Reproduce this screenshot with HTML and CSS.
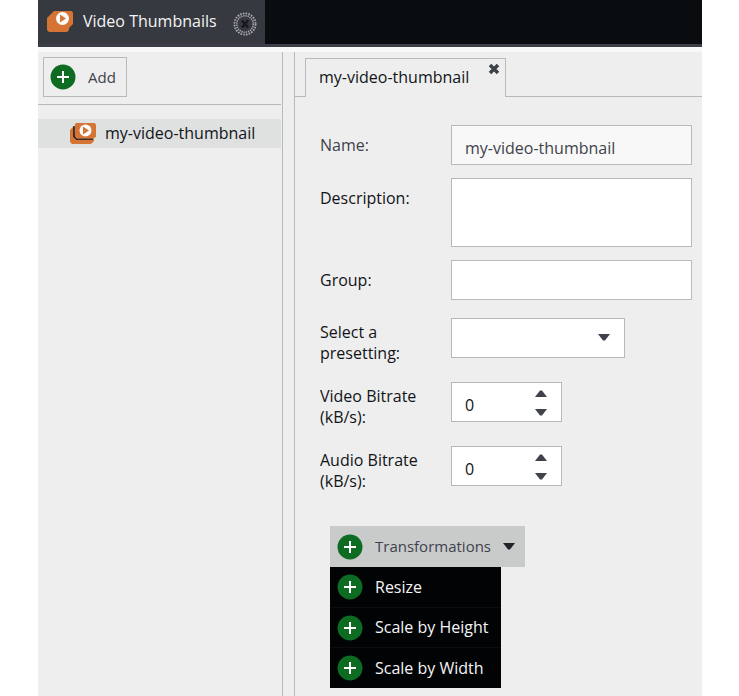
FILE: index.html
```html
<!DOCTYPE html>
<html lang="en">
<head>
<meta charset="utf-8">
<title>Video Thumbnails</title>
<link rel="stylesheet" href="styles.css">
</head>
<body>
<svg class="defs" aria-hidden="true">
  <symbol id="plus" viewBox="0 0 26 26">
    <circle cx="13" cy="13" r="12.5" fill="#0d6b22"/>
    <path d="M7 13h12M13 7v12" stroke="#fff" stroke-width="2"/>
  </symbol>
  <symbol id="down" viewBox="0 0 12 7"><path d="M0 0h12L7 6.500H5z" fill="currentColor"/></symbol>
  <symbol id="up" viewBox="0 0 12 7"><path d="M0 7h12L7 .5H5z" fill="currentColor"/></symbol>
</svg>
<div class="app">
  <header class="topbar">
    <div class="app-tab">
      <svg class="film" viewBox="0 0 26 21" aria-hidden="true">
        <path d="M6 1l1-1h17.500L26 1.500V13l-4 4v2l-2 2H2l-2-2V7z" fill="#d67436"/>
        <circle cx="15.500" cy="7.500" r="6.500" fill="#fff"/>
        <path d="M13 3.500v8l6-4z" fill="#d67436"/>
      </svg>
      <span>Video Thumbnails</span>
      <button class="app-close" aria-label="Close panel">
        <svg viewBox="0 0 24 24">
          <circle cx="12" cy="12" r="9.500" fill="none" stroke="#a9abad" stroke-width="4" stroke-dasharray="1.500 1"/>
          <circle cx="12" cy="12" r="9.500" fill="none" stroke="#363940" stroke-width=".8"/>
          <path d="M9 8.500l6 7M15 8.500l-6 7" stroke="#15181c" stroke-width="2.500"/>
        </svg>
      </button>
    </div>
  </header>
  <div class="workspace">
    <aside class="sidebar">
      <div class="toolbar">
        <button class="add"><svg class="plus"><use href="#plus"/></svg><span>Add</span></button>
      </div>
      <a class="tree-item" href="#form">
        <svg class="film" viewBox="0 0 26 21" aria-hidden="true">
          <path d="M4 3L0 7v12l2 2h19l3-3v-2H5z" fill="#d67436"/>
          <path d="M4 3v10.500L6.500 16H23" fill="none" stroke="#111418" stroke-width="1.500"/>
          <path d="M6 0h18.500L26 1.500v12L24 15.500H7L5 13.500V1z" fill="#d67436"/>
          <circle cx="15.500" cy="7.500" r="6" fill="#fff"/>
          <path d="M13 3.500v8l6-4z" fill="#d67436"/>
        </svg>
        <span>my-video-thumbnail</span>
      </a>
    </aside>
    <main class="editor">
      <div class="tabs">
        <div class="tab">
          <span>my-video-thumbnail</span>
          <button class="tab-close" aria-label="Close tab">
            <svg viewBox="0 0 12 12"><path d="M2 2l8 8M10 2l-8 8" stroke="#3f424b" stroke-width="3.500"/></svg>
          </button>
        </div>
      </div>
      <form class="form" id="form">
        <div class="row muted"><label for="name">Name:</label><input class="field" id="name" value="my-video-thumbnail" readonly></div>
        <div class="row"><label for="description">Description:</label><textarea class="field" id="description"></textarea></div>
        <div class="row"><label for="group">Group:</label><input class="field" id="group"></div>
        <div class="row tall">
          <label for="preset">Select a presetting:</label>
          <div class="select"><select class="field" id="preset"><option></option></select><svg class="arrow"><use href="#down"/></svg></div>
        </div>
        <div class="row tall">
          <label for="video">Video Bitrate (kB/s):</label>
          <div class="spinner"><input class="field" id="video" type="number" value="0">
            <div class="steps"><button type="button" aria-label="Increase video bitrate"><svg class="arrow"><use href="#up"/></svg></button><button type="button" aria-label="Decrease video bitrate"><svg class="arrow"><use href="#down"/></svg></button></div>
          </div>
        </div>
        <div class="row tall">
          <label for="audio">Audio Bitrate (kB/s):</label>
          <div class="spinner"><input class="field" id="audio" type="number" value="0">
            <div class="steps"><button type="button" aria-label="Increase audio bitrate"><svg class="arrow"><use href="#up"/></svg></button><button type="button" aria-label="Decrease audio bitrate"><svg class="arrow"><use href="#down"/></svg></button></div>
          </div>
        </div>
      </form>
      <div class="dropdown">
        <button class="trigger"><svg class="plus"><use href="#plus"/></svg><span>Transformations</span><svg class="arrow"><use href="#down"/></svg></button>
        <div class="menu">
          <button><svg class="plus"><use href="#plus"/></svg><span>Resize</span></button>
          <button><svg class="plus"><use href="#plus"/></svg><span>Scale by Height</span></button>
          <button><svg class="plus"><use href="#plus"/></svg><span>Scale by Width</span></button>
        </div>
      </div>
    </main>
  </div>
</div>
</body>
</html>
```
FILE: styles.css
```css
* { box-sizing: border-box; }
body {
  margin: 0;
  padding: 0 37px 0 38px;
  background: #fff;
  color: #111418;
  font: 16px/21px "Open Sans", sans-serif;
}
button, input, select, textarea { font: inherit; color: inherit; }
button { padding: 0; border: 0; background: none; cursor: pointer; }
svg { display: block; flex: none; }
.defs { position: absolute; width: 0; height: 0; }
.app { display: flex; flex-direction: column; min-height: 100vh; background: #eee; }
.topbar { display: flex; background: #0a0d10; border-bottom: 3px solid #3b3e46; }
.app-tab {
  display: flex;
  align-items: center;
  gap: 10px;
  height: 44px;
  padding: 0 8px 2px 9px;
  background: #363940;
  color: #f4f4f4;
}
.app-tab span { margin-right: 6px; }
.film { width: 26px; height: 21px; }
.app-close { align-self: flex-end; margin-bottom: 6px; }
.app-close svg { width: 24px; height: 24px; }
.workspace { display: flex; flex: 1; border-top: 5px solid #f8f8f8; }
.sidebar { width: 245px; border-right: 1px solid #b8baba; }
.toolbar { padding: 5px; border-bottom: 1px solid #b8baba; margin-right: 1px; height: 53px; }
.add {
  display: flex;
  align-items: center;
  gap: 12px;
  height: 40px;
  padding: 0 10px 0 6px;
  border: 1px solid #b8baba;
  color: #3f424b;
  font-size: 15px;
}
.plus { width: 26px; height: 26px; }
.tree-item {
  display: flex;
  align-items: center;
  gap: 9px;
  height: 29px;
  margin: 14px 1px 0 0;
  padding-left: 32px;
  background: #dfe0e0;
  color: #111418;
  text-decoration: none;
}
.editor { flex: 1; min-width: 0; margin-left: 11px; border-left: 1px solid #b8baba; }
.tabs { display: flex; padding-top: 6px; }
.tabs::before, .tabs::after { content: ""; width: 10px; border-bottom: 1px solid #b8baba; }
.tabs::after { flex: 1; }
.tab {
  display: flex;
  justify-content: space-between;
  width: 201px;
  height: 39px;
  padding: 8px 5px 0 13px;
  border: 1px solid #b8baba;
  border-bottom: 0;
}
.tab-close { align-self: flex-start; margin-top: -4px; }
.tab-close svg { width: 12px; height: 12px; }
.form { display: flex; flex-direction: column; gap: 13px; padding: 28px 10px 0 25px; }
.row { display: grid; grid-template-columns: 131px 1fr; align-items: start; }
.row label { width: 110px; padding-top: 10px; }
.muted { color: #3f424b; }
.tall { min-height: 46px; margin-top: 5px; }
.tall label { padding-top: 4px; }
.field {
  display: block;
  width: 100%;
  height: 40px;
  margin: 0;
  padding: 5px 13px 0;
  border: 1px solid #b8baba;
  border-radius: 0;
  background: #fff;
  appearance: none;
  outline: none;
}
.muted .field { background: #f8f8f8; }
textarea.field { height: 69px; resize: none; }
.select { position: relative; width: 174px; }
.select .arrow { position: absolute; top: 16px; right: 15px; pointer-events: none; }
.arrow { width: 12px; height: 7px; color: #3f424b; }
.spinner { position: relative; width: 111px; }
.spinner .field { appearance: textfield; }
.spinner .field::-webkit-inner-spin-button { appearance: none; margin: 0; }
.steps { position: absolute; top: 8px; right: 15px; display: flex; flex-direction: column; gap: 12px; }
.dropdown { position: relative; width: 195px; margin: 34px 0 0 35px; }
.trigger, .menu button { display: flex; align-items: center; gap: 12px; width: 100%; padding-left: 7px; text-align: left; }
.trigger { height: 41px; background: #c9cbcb; color: #3f424b; font-size: 15px; }
.trigger .arrow { color: #202328; }
.menu { position: absolute; top: 41px; left: 0; width: 171px; background: #020305; color: #f4f4f4; }
.menu button { height: 40px; }
.menu button + button { border-top: 1px solid #0b0d10; }
.menu button:last-child { height: 41px; }
```
